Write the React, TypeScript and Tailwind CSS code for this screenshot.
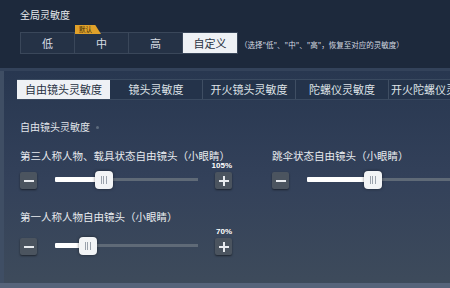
import React from 'react';

const cjk = { fontFamily: '"Noto Sans CJK SC", "Noto Sans", sans-serif' };

const levels = ['低', '中', '高', '自定义'];
const tabs = ['自由镜头灵敏度', '镜头灵敏度', '开火镜头灵敏度', '陀螺仪灵敏度', '开火陀螺仪灵敏度'];

function StepButton({ sign }: { sign: '-' | '+' }) {
  return (
    <div className="flex h-[17px] w-[17px] shrink-0 items-center justify-center rounded-[2px] bg-[#4b545f] shadow-[0_1px_2px_rgba(0,0,0,0.5)]">
      <div className="relative h-[10px] w-[10px]">
        <div className="absolute left-0 top-[4px] h-[2px] w-[10px] bg-[#e8ebef]" />
        {sign === '+' && <div className="absolute left-[4px] top-0 h-[10px] w-[2px] bg-[#e8ebef]" />}
      </div>
    </div>
  );
}

function Slider({ pct, value, trackW, showPlus = true }: { pct: number; value?: string; trackW: number; showPlus?: boolean }) {
  return (
    <div className="flex items-end">
      <StepButton sign="-" />
      <div className="relative ml-[18px] h-[18px]" style={{ width: trackW }}>
        <div className="absolute left-0 right-0 top-[7px] h-[3px] bg-[#5f6a77]" />
        <div className="absolute left-0 top-[6px] h-[5px] rounded-[1px] bg-white" style={{ width: (trackW * pct) / 100 }} />
        <div
          className="absolute top-0 flex h-[18px] w-[18px] items-center justify-center gap-[1.5px] rounded-[4px] bg-[#f2f4f6] shadow-[0_0_3px_rgba(0,0,0,0.5)]"
          style={{ left: (trackW * pct) / 100 - 9 }}
        >
          <div className="h-[8px] w-[1px] bg-[#9aa2ac]" />
          <div className="h-[8px] w-[1px] bg-[#9aa2ac]" />
          <div className="h-[8px] w-[1px] bg-[#9aa2ac]" />
        </div>
      </div>
      {showPlus && (
        <div className="relative ml-[17px]">
          <div className="absolute bottom-[19px] right-0 whitespace-nowrap text-[8px] font-bold leading-[8px] text-white" style={{ fontFamily: '"Liberation Sans", sans-serif' }}>
            {value}
          </div>
          <StepButton sign="+" />
        </div>
      )}
    </div>
  );
}

export default function App() {
  return (
    <div className="flex h-[288px] w-[450px] flex-col overflow-hidden bg-[#1c283a] text-white" style={cjk}>
      <div className="h-[68px] shrink-0 bg-[#1d293c] pl-[20px] pt-[8px]">
        <div className="text-[10px] leading-[14px] text-[#e6e9ee]">全局灵敏度</div>
        <div className="mt-[10px] flex items-center">
          <div className="flex border border-[#3a475a]">
            {levels.map((l, i) => (
              <div
                key={l}
                className={
                  'relative flex h-[20px] w-[54px] items-center justify-center text-[11px] ' +
                  (i === 3 ? 'bg-[#eef1f5] text-[#2a3444]' : 'border-r border-[#3a475a] bg-[#253246] text-[#d8dde4]')
                }
              >
                {i === 1 && (
                  <div className="absolute left-0 top-[-8px] flex h-[9px] w-[26px] items-center bg-[#e0a12a] pl-[4px] text-[6.5px] leading-none text-[#3a2a08] [clip-path:polygon(0_0,78%_0,100%_100%,0_100%)]">
                    默认
                  </div>
                )}
                {l}
              </div>
            ))}
          </div>
          <div className="ml-[2px] mt-[4px] whitespace-nowrap text-[7.5px] text-[#d4d9e0]">
            （选择"低"、"中"、"高"，恢复至对应的灵敏度）
          </div>
        </div>
      </div>
      <div className="h-[3px] shrink-0 bg-[#33425a]" />
      <div className="relative flex flex-1 flex-col bg-gradient-to-b from-[#283750] via-[#33415a] to-[#3e4b5b] pl-[17px]">
        <div className="absolute bottom-0 left-0 top-0 w-[4px] bg-[#3f4e64]" />
        <div className="mt-[8px] flex h-[21px] border-y border-[#3a4a60]">
          {tabs.map((t, i) => (
            <div
              key={t}
              className={
                'flex w-[93px] shrink-0 items-center justify-center whitespace-nowrap text-[11px] ' +
                (i === 0 ? 'bg-[#eef1f5] text-[#26303f]' : 'border-r border-[#3f4e63] bg-[#24334a] text-[#dfe3e8]')
              }
            >
              {t}
            </div>
          ))}
        </div>
        <div className="mt-[20px] flex items-center pl-[3px] text-[10px] leading-[14px] text-[#e2e6eb]">
          自由镜头灵敏度
          <span className="ml-[6px] h-[3px] w-[3px] rounded-full bg-[#5d6b7d]" />
        </div>
        <div className="mt-[16px] flex pl-[3px]">
          <div className="w-[255px]">
            <div className="text-[10.5px] leading-[12px] text-[#e8ebef]">第三人称人物、载具状态自由镜头（小眼睛）</div>
            <div className="mt-[9px]">
              <Slider pct={34} value="105%" trackW={143} />
            </div>
          </div>
          <div>
            <div className="text-[10.5px] leading-[12px] text-[#e8ebef]">跳伞状态自由镜头（小眼睛）</div>
            <div className="mt-[9px]">
              <Slider pct={46} trackW={143} showPlus={false} />
            </div>
          </div>
        </div>
        <div className="mt-[22px] pl-[3px]">
          <div className="text-[10.5px] leading-[12px] text-[#e8ebef]">第一人称人物自由镜头（小眼睛）</div>
          <div className="mt-[14px]">
            <Slider pct={23} value="70%" trackW={143} />
          </div>
        </div>
        <div className="absolute bottom-0 left-0 right-0 h-[5px] bg-[#56647a]" />
      </div>
    </div>
  );
}
